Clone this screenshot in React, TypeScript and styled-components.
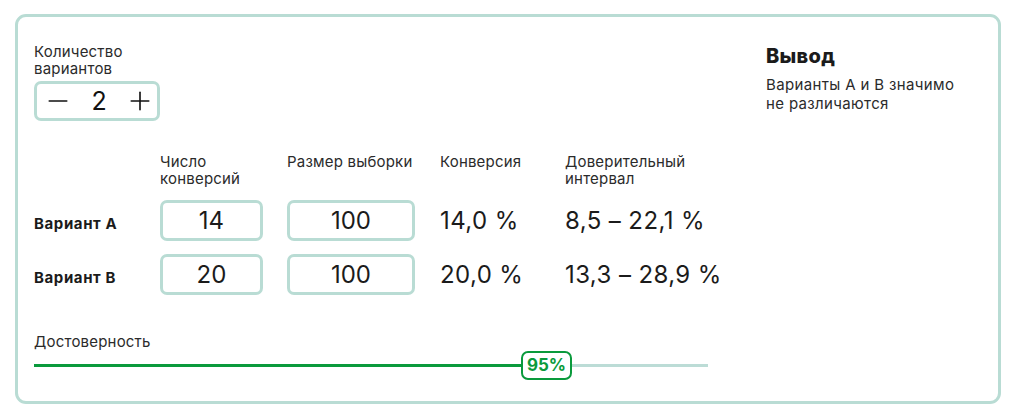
import * as React from 'react';
import styled, { createGlobalStyle } from 'styled-components';
import { Minus, Plus } from 'lucide-react';

const GlobalStyle = createGlobalStyle`
  body {
    margin: 0;
    background: #fff;
    font-family: Inter, "Noto Sans", sans-serif;
    color: #1b1b1b;
  }
`;

const Page = styled.div`
  padding: 14px 21px 11px 15px;
`;

const Card = styled.div`
  display: flex;
  justify-content: space-between;
  border: 3px solid #b9dcd4;
  border-radius: 11px;
  padding: 26px 16px 20px 16px;
  height: 390px;
  box-sizing: border-box;
`;

const Main = styled.div`
  display: flex;
  flex-direction: column;
  width: 674px;
`;

const Label = styled.div`
  font-size: 15px;
  line-height: 17px;
  letter-spacing: 0.2px;
  color: #2b2b2b;
`;

const Stepper = styled.div`
  display: flex;
  align-items: center;
  justify-content: space-between;
  width: 126px;
  height: 40px;
  box-sizing: border-box;
  margin-top: 4px;
  padding: 0 2px 0 6px;
  border: 3px solid #b9dcd4;
  border-radius: 7px;
  font-size: 25px;
  color: #111;
`;

const Table = styled.div`
  display: grid;
  grid-template-columns: 126px 127px 153px 125px auto;
  align-items: center;
  row-gap: 13px;
  margin-top: 32px;
`;

const Head = styled(Label)`
  align-self: start;
  height: 34px;
`;

const RowName = styled.div`
  font-size: 15px;
  font-weight: 700;
  letter-spacing: 0.6px;
  padding-top: 6px;
`;

const Field = styled.div<{ $w: number }>`
  width: ${(p) => p.$w}px;
  height: 41px;
  box-sizing: border-box;
  border: 3px solid #b9dcd4;
  border-radius: 7px;
  display: flex;
  align-items: center;
  justify-content: center;
  font-size: 24px;
`;

const Value = styled.div`
  font-size: 24px;
  letter-spacing: 0.4px;
  white-space: nowrap;
`;

const Reliability = styled.div`
  margin-top: 38px;
`;

const Track = styled.div`
  display: flex;
  align-items: center;
  height: 30px;
`;

const Filled = styled.div`
  height: 3px;
  width: 487px;
  background: #0a9a3c;
`;

const Rest = styled.div`
  height: 3px;
  flex: 1;
  background: #bcdcd6;
`;

const Thumb = styled.div`
  width: 51px;
  height: 29px;
  box-sizing: border-box;
  border: 2px solid #0a9a3c;
  border-radius: 7px;
  background: #fff;
  color: #0a9a3c;
  font-weight: 700;
  font-size: 17px;
  display: flex;
  align-items: center;
  justify-content: center;
`;

const Aside = styled.div`
  width: 216px;
  padding-top: 2px;
`;

const Title = styled.div`
  font-size: 20px;
  font-weight: 800;
  line-height: 22px;
  letter-spacing: 0.3px;
`;

const Text = styled.div`
  margin-top: 8px;
  font-size: 15px;
  line-height: 19px;
  letter-spacing: 0.35px;
  color: #2b2b2b;
`;

const rows = [
  { name: 'Вариант А', conv: '14', size: '100', rate: '14,0 %', ci: '8,5 – 22,1 %' },
  { name: 'Вариант B', conv: '20', size: '100', rate: '20,0 %', ci: '13,3 – 28,9 %' },
];

export default function App() {
  return (
    <Page>
      <GlobalStyle />
      <Card>
        <Main>
          <Label>
            Количество
            <br />
            вариантов
          </Label>
          <Stepper>
            <Minus size={30} strokeWidth={1.3} />
            <span>2</span>
            <Plus size={30} strokeWidth={1.3} />
          </Stepper>
          <Table>
            <div />
            <Head>
              Число
              <br />
              конверсий
            </Head>
            <Head>Размер выборки</Head>
            <Head>Конверсия</Head>
            <Head>
              Доверительный
              <br />
              интервал
            </Head>
            {rows.map((r) => (
              <React.Fragment key={r.name}>
                <RowName>{r.name}</RowName>
                <Field $w={103}>{r.conv}</Field>
                <Field $w={128}>{r.size}</Field>
                <Value>{r.rate}</Value>
                <Value>{r.ci}</Value>
              </React.Fragment>
            ))}
          </Table>
          <Reliability>
            <Label>Достоверность</Label>
            <Track>
              <Filled />
              <Thumb>95%</Thumb>
              <Rest />
            </Track>
          </Reliability>
        </Main>
        <Aside>
          <Title>Вывод</Title>
          <Text>
            Варианты А и В значимо
            <br />
            не различаются
          </Text>
        </Aside>
      </Card>
    </Page>
  );
}
